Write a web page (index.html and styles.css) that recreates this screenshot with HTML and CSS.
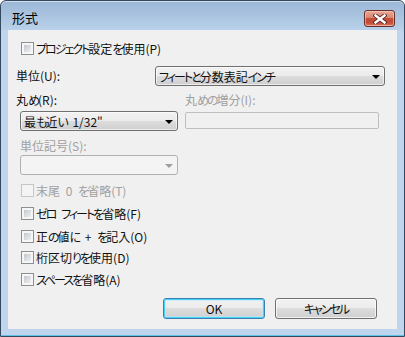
FILE: index.html
```html
<!DOCTYPE html>
<html lang="ja">
<head>
<meta charset="utf-8">
<link rel="stylesheet" href="styles.css">
</head>
<body>
<div class="window">
  <div class="titlebar">
    <span class="title">形式</span>
    <div class="close">
      <svg width="14" height="10" viewBox="0 0 14 10">
        <path d="M2.5 1.5 L11.5 8.5 M11.5 1.5 L2.5 8.5" stroke="#5b2a25" stroke-width="4.2" stroke-linecap="square"/>
        <path d="M2.5 1.5 L11.5 8.5 M11.5 1.5 L2.5 8.5" stroke="#ffffff" stroke-width="2.4" stroke-linecap="square"/>
      </svg>
    </div>
  </div>
  <div class="client">
    <div class="check row-proj"><span class="box"></span><span><span class="k">プロジェクト</span>設定<span class="k">を</span>使用(P)</span></div>
    <div class="unit-row">
      <span class="lbl">単位(U):</span>
      <div class="select wide"><span><span class="k">フィートと</span>分数表記<span class="k">インチ</span></span><i class="arrow"></i></div>
    </div>
    <div class="round-row">
      <div class="col">
        <span class="lbl">丸<span class="k">め</span>(R):</span>
        <div class="select narrow"><span>最<span class="k">も</span>近<span class="k">い</span> 1/32"</span><i class="arrow"></i></div>
      </div>
      <div class="col col2">
        <span class="lbl dis">丸<span class="k">めの</span>増分(I):</span>
        <div class="input-dis"></div>
      </div>
    </div>
    <div class="sym">
      <span class="lbl dis">単位記号(S):</span>
      <div class="select narrow disabled"><span></span><i class="arrow"></i></div>
    </div>
    <div class="check dis c1"><span class="box"></span><span>末尾 0 <span class="k">を</span>省略(T)</span></div>
    <div class="check c2"><span class="box"></span><span><span class="k">ゼロ</span> <span class="k">フィートを</span>省略(F)</span></div>
    <div class="check c3"><span class="box"></span><span>正<span class="k">の</span>値<span class="k">に</span> + <span class="k">を</span>記入(O)</span></div>
    <div class="check c4"><span class="box"></span><span>桁区切<span class="k">りを</span>使用(D)</span></div>
    <div class="check c5"><span class="box"></span><span><span class="k">スペースを</span>省略(A)</span></div>
    <div class="buttons">
      <div class="btn default">OK</div>
      <div class="btn"><span class="k">キャンセル</span></div>
    </div>
  </div>
</div>
</body>
</html>
```
FILE: styles.css
```css
* { box-sizing: border-box; }
html, body { margin: 0; padding: 0; background: #ffffff; }
body {
  font-family: "Noto Sans CJK JP", sans-serif;
  font-size: 12px;
  color: #111;
  font-feature-settings: "palt";
  word-spacing: 3px;
}
.k { letter-spacing: -2px; }
.window {
  width: 405px;
  height: 337px;
  border: 1px solid #34495e;
  border-radius: 6px 6px 0 0;
  background: linear-gradient(#9cb8d7 0px, #a9c3df 14px, #b9d1ea 29px, #bed5ed 29px);
  padding: 0 7px 7px 7px;
  display: flex;
  flex-direction: column;
  box-shadow: inset 0 1px 0 rgba(255,255,255,0.5), inset 0 -1px 0 #5fc3e6;
}
.titlebar {
  height: 29px;
  display: flex;
  align-items: flex-start;
  justify-content: space-between;
}
.title {
  margin: 9px 0 0 4px;
  font-size: 13px;
  line-height: 16px;
  color: #000;
}
.close {
  margin: 9px 2px 0 0;
  width: 31px;
  height: 17px;
  border: 1px solid #6a2f2a;
  border-radius: 3px;
  background: linear-gradient(#e8a795 0%, #d98672 45%, #c4503b 50%, #c24a35 75%, #d67a5f 100%);
  box-shadow: inset 0 0 0 1px rgba(255,220,210,0.5);
  display: flex;
  align-items: center;
  justify-content: center;
}
.client {
  height: 299px;
  background: #f0f0f0;
  padding: 0 0 0 8px;
  display: flex;
  flex-direction: column;
  align-items: flex-start;
}
.check {
  display: flex;
  align-items: center;
  height: 13px;
  line-height: 13px;
  gap: 2px;
  margin-left: 5px;
  white-space: nowrap;
}
.box {
  width: 13px;
  height: 13px;
  flex: none;
  border: 1px solid #8e8f8f;
  padding: 2px;
  background: linear-gradient(135deg, #c3c7cc, #eef0f2) content-box, linear-gradient(#f4f4f4, #f4f4f4) padding-box;
  box-shadow: inset 0 0 0 2px #f6f6f6;
}
.check.dis { color: #a0a0a0; }
.check.dis .box {
  border-color: #c6c6c6;
  background: #f4f4f4;
  box-shadow: none;
}
.row-proj { margin-top: 12px; }
.unit-row {
  margin-top: 11px;
  display: flex;
  align-items: center;
  width: 100%;
}
.unit-row .lbl { width: 139px; }
.lbl { line-height: 16px; white-space: nowrap; }
.lbl.dis { color: #a0a0a0; }
.select {
  height: 20px;
  border: 1px solid #707070;
  border-radius: 3px;
  background: linear-gradient(#f2f2f2 0%, #ebebeb 50%, #dddddd 50%, #cfcfcf 100%);
  box-shadow: inset 0 0 0 1px rgba(255,255,255,0.6);
  display: flex;
  align-items: center;
  justify-content: space-between;
  padding: 0 4px 0 3px;
  white-space: nowrap;
}
.select.wide { width: 230px; }
.select.narrow { width: 158px; margin-left: 4px; }
.arrow {
  width: 0;
  height: 0;
  border-left: 4px solid transparent;
  border-right: 4px solid transparent;
  border-top: 4px solid #000;
  margin-top: 1px;
}
.select.disabled {
  border-color: #adb2b5;
  background: #f4f4f4;
  box-shadow: none;
}
.select.disabled .arrow { border-top-color: #a0a0a0; }
.round-row {
  margin-top: 6px;
  display: flex;
  gap: 7px;
}
.col {
  display: flex;
  flex-direction: column;
  align-items: flex-start;
}
.col .select { margin-top: 3px; }
.input-dis {
  width: 194px;
  height: 17px;
  border: 1px solid #bfbfbf;
  border-radius: 2px;
  background: #f0f0f0;
  margin-top: 4px;
}
.sym {
  margin-top: 7px;
  display: flex;
  flex-direction: column;
  align-items: flex-start;
}
.sym .lbl { margin-left: 4px; }
.sym .select { margin-top: 1px; }
.c1 { margin-top: 9px; }
.c2 { margin-top: 10px; }
.c3 { margin-top: 10px; }
.c4 { margin-top: 8px; }
.c5 { margin-top: 9px; }
.buttons {
  margin-top: 12px;
  align-self: flex-end;
  margin-right: 20px;
  display: flex;
  gap: 10px;
}
.btn {
  width: 102px;
  height: 21px;
  border: 1px solid #707070;
  border-radius: 3px;
  background: linear-gradient(#f2f2f2 0%, #ebebeb 50%, #dddddd 50%, #cfcfcf 100%);
  box-shadow: inset 0 0 0 1px rgba(255,255,255,0.7);
  display: flex;
  align-items: center;
  justify-content: center;
  line-height: 13px;
}
.btn.default {
  border-color: #3c7fb1;
  box-shadow: inset 0 0 0 1px #48d2f8, inset 0 0 0 2px rgba(180,235,252,0.6);
}
```
